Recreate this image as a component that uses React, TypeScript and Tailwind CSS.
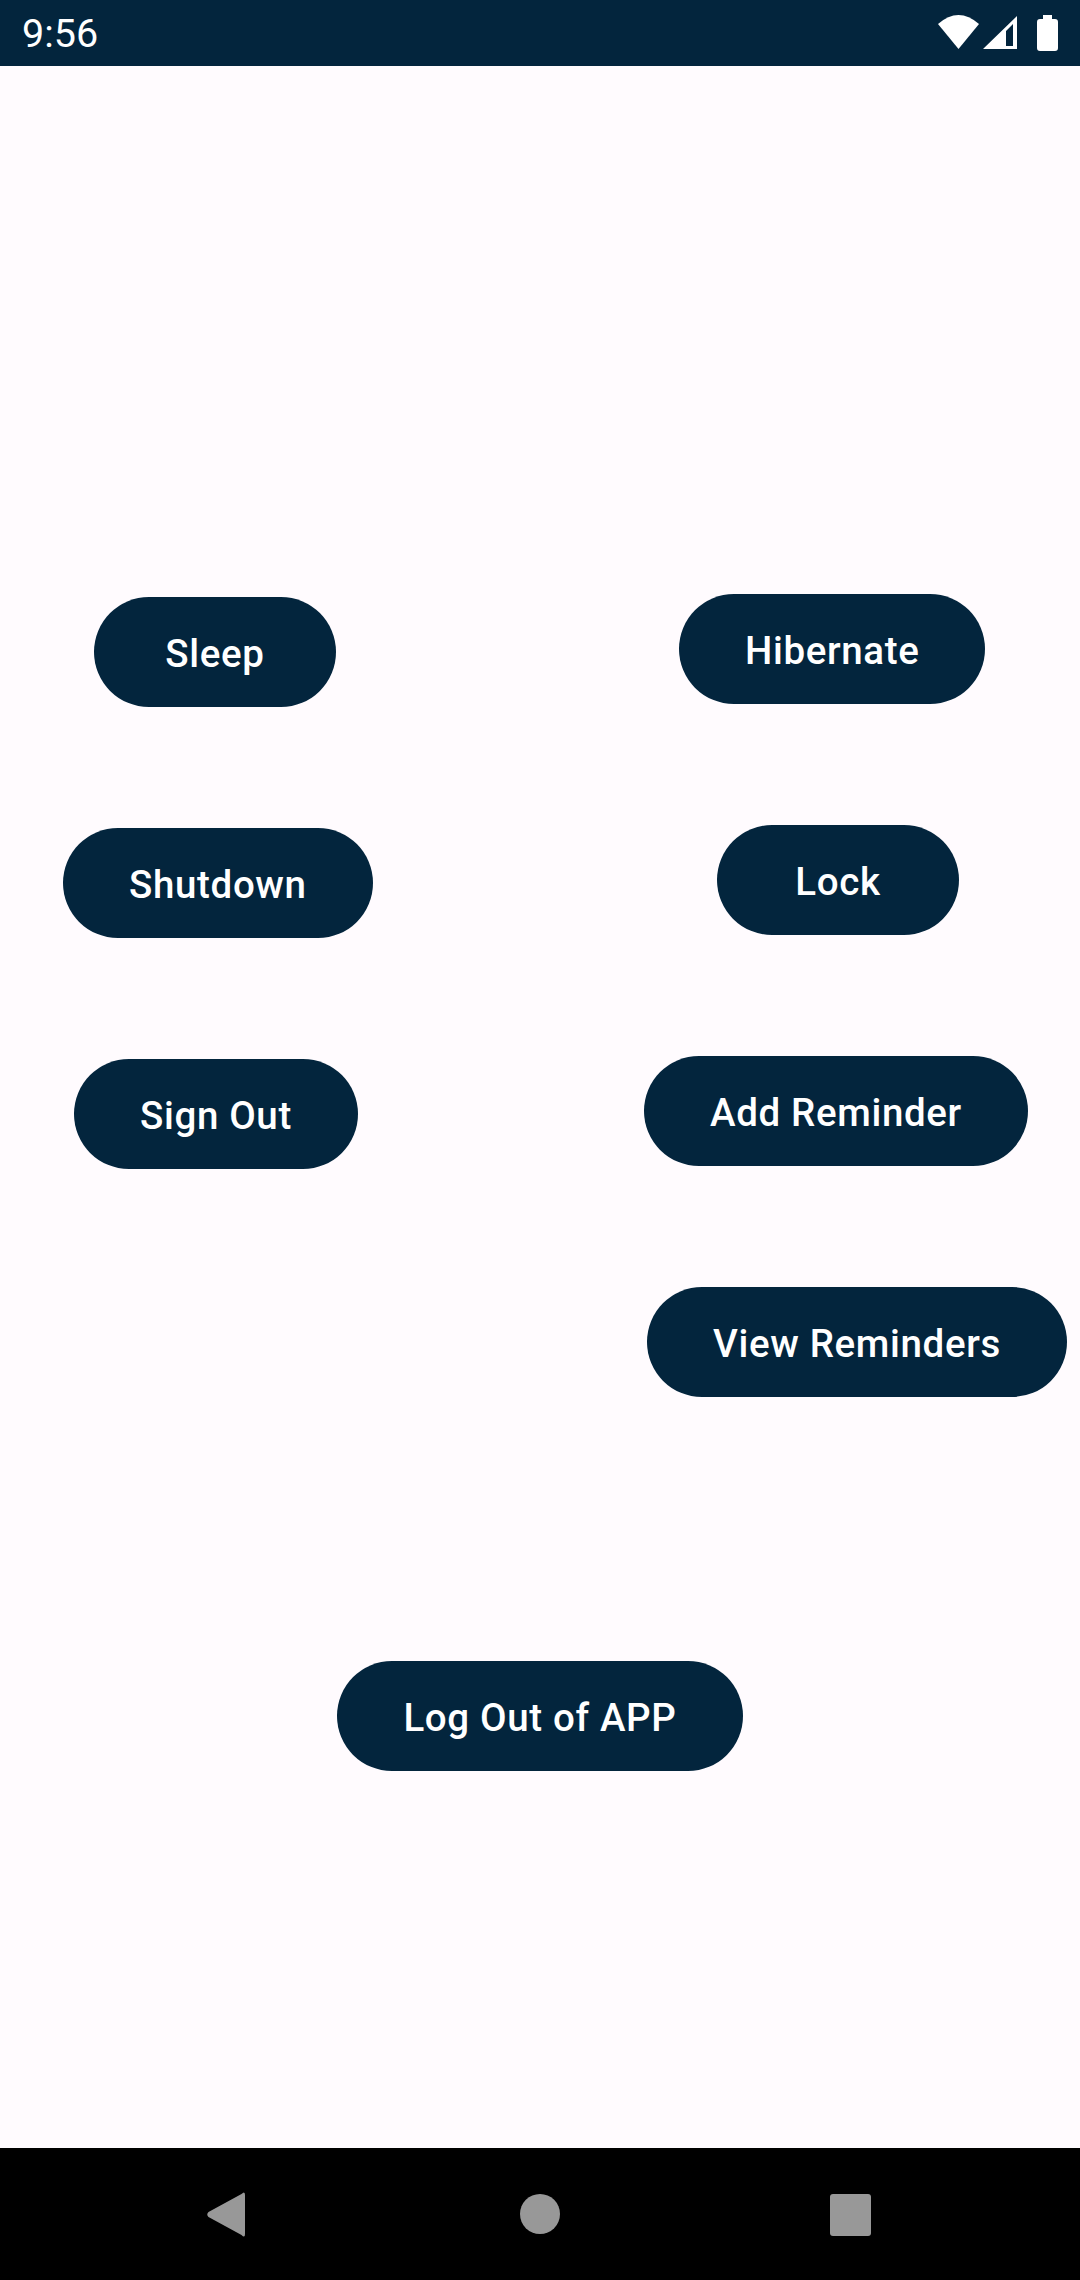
function StatusBar() {
  return (
    <div className="h-[66px] bg-[#03253d] flex items-center justify-between pl-[22px] pr-[22px] shrink-0">
      <span className="text-white text-[39.5px] leading-none pt-[2px] font-['Roboto',sans-serif]">9:56</span>
      <svg width="120" height="66" viewBox="0 0 120 66" fill="white">
        <path d="M0 24 Q20.5 6 41 24 L20.5 49 Z" />
        <path fillRule="evenodd" d="M45 49 L79 16 L79 49 Z M75 24 L68 31 L68 46 L75 46 Z" />
        <path d="M99 22 Q99 19 102 19 L105 19 L105 15 L114 15 L114 19 L117 19 Q120 19 120 22 L120 48 Q120 51 117 51 L102 51 Q99 51 99 48 Z" />
      </svg>
    </div>
  );
}

function NavBar() {
  return (
    <div className="h-[132px] bg-black shrink-0">
      <svg width="1080" height="132" viewBox="0 0 1080 132" fill="#989898">
        <path d="M241.5 46 Q245 42.5 245 47 L245 86 Q245 90.5 241.5 87 L208.5 69 Q206 66.5 208.5 64 Z" />
        <circle cx="540" cy="66" r="20" />
        <rect x="830" y="46" width="41" height="42" rx="3" />
      </svg>
    </div>
  );
}

function PillButton({ label, className = "" }: { label: string; className?: string }) {
  return (
    <button
      className={`h-[110px] min-w-[242px] rounded-[55px] bg-[#03253d] text-white text-[38.5px] font-medium tracking-[0.65px] px-[66px] pt-[3px] whitespace-nowrap self-start ${className}`}
    >
      {label}
    </button>
  );
}

export default function App() {
  return (
    <div className="w-[1080px] h-[2280px] flex flex-col bg-[#fffbfe] font-['Roboto',sans-serif] overflow-hidden">
      <StatusBar />
      <main className="flex-1 flex flex-col">
        <div className="flex pt-[528px]">
          <div className="w-[644px] flex flex-col pt-[3px] gap-[121px]">
            <PillButton label="Sleep" className="ml-[94px]" />
            <PillButton label="Shutdown" className="ml-[63px]" />
            <PillButton label="Sign Out" className="ml-[74px]" />
          </div>
          <div className="flex-1 flex flex-col gap-[121px]">
            <PillButton label="Hibernate" className="ml-[35px]" />
            <PillButton label="Lock" className="ml-[73px]" />
            <PillButton label="Add Reminder" />
            <PillButton label="View Reminders" className="ml-[3px]" />
          </div>
        </div>
        <div className="flex justify-center pt-[264px]">
          <PillButton label="Log Out of APP" />
        </div>
      </main>
      <NavBar />
    </div>
  );
}
